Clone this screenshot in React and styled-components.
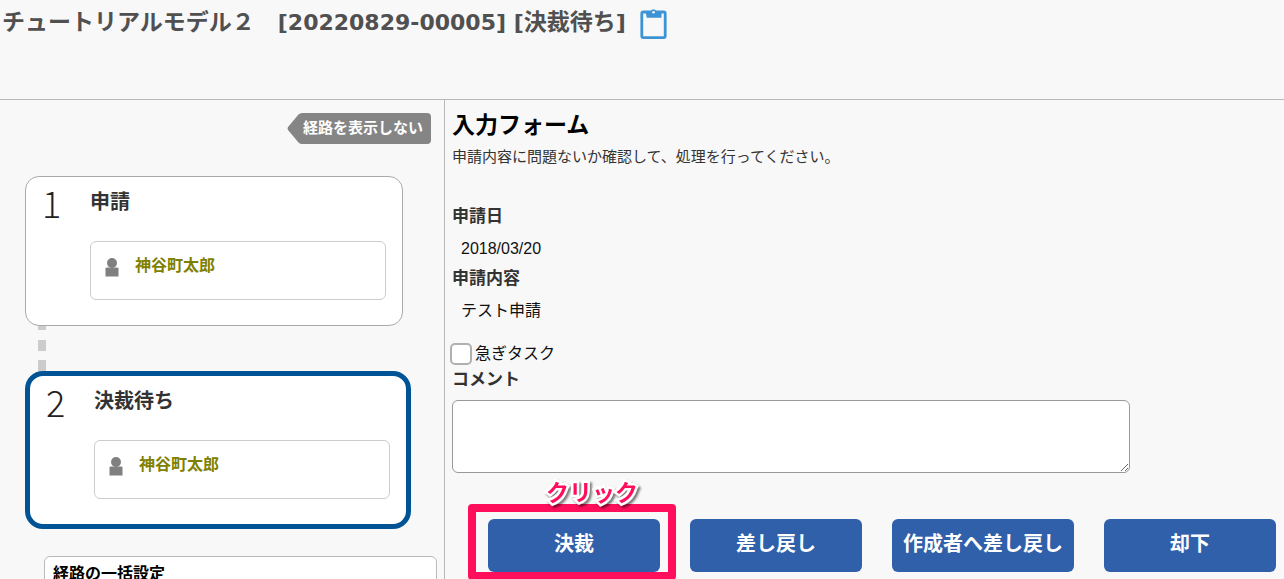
import React from "react";
import styled, { createGlobalStyle } from "styled-components";

const GlobalStyle = createGlobalStyle`
  *, *::before, *::after { box-sizing: border-box; }
  body {
    margin: 0;
    background: #f8f8f8;
    color: #333;
    font-family: "Liberation Sans", "Noto Sans CJK JP", sans-serif;
  }
  button, input, textarea { font: inherit; }
  h1, h2, h3, p, dl, dt, dd, ol { margin: 0; padding: 0; }
`;

const Page = styled.div`
  display: flex;
  flex-direction: column;
  height: 100vh;
  overflow: hidden;
`;

const Header = styled.header`
  display: flex;
  align-items: flex-start;
  gap: 14px;
  flex: none;
  min-height: 100px;
  padding: 4px 2px;
  border-bottom: 1px solid #b8b8b8;
`;

const Title = styled.h1`
  font-family: "Noto Sans CJK JP", sans-serif;
  font-size: 23px;
  line-height: 32px;
  font-weight: 700;
  color: #505050;
`;

const TitleCode = styled.span`
  font-family: "DejaVu Sans", sans-serif;
  font-size: 22px;
  line-height: 24px;
`;

const ClipboardButton = styled.button`
  display: flex;
  margin: 0;
  padding: 4px 0 0;
  border: 0;
  background: none;
`;

const Body = styled.div`
  display: flex;
  flex: 1;
  min-height: 0;
`;

const RoutePane = styled.aside`
  display: flex;
  flex-direction: column;
  align-items: flex-start;
  flex: none;
  width: 445px;
  padding: 13px 7px 0 25px;
  border-right: 1px solid #b8b8b8;
  overflow: hidden;
`;

const HideRouteButton = styled.button`
  display: flex;
  align-self: flex-end;
  flex: none;
  align-items: center;
  height: 31px;
  margin: 0 6px 32px 0;
  padding: 0;
  border: 0;
  background: none;
  color: #fff;
  font-size: 15px;
  font-weight: 700;
`;

const ToggleText = styled.span`
  height: 31px;
  padding: 0 8px 0 0;
  border-radius: 0 4px 4px 0;
  background: #858585;
  line-height: 30px;
`;

const Steps = styled.ol`
  list-style: none;
`;

const Step = styled.li`
  & + &::before {
    content: "";
    display: block;
    width: 8px;
    height: 45px;
    margin-left: 13px;
    background: linear-gradient(#ccc 0 4px, transparent 4px 14px, #ccc 14px 25px, transparent 25px 34px, #ccc 34px);
  }
`;

const StepCard = styled.section`
  box-sizing: content-box;
  display: grid;
  grid-template-columns: 48px 296px;
  grid-template-rows: 64px 59px;
  width: 360px;
  height: 148px;
  padding: 0 0 0 16px;
  border: ${(p) => (p.$current ? "5px solid #005496" : "1px solid #aaa")};
  border-radius: ${(p) => (p.$current ? "18px" : "14px")};
  background: #fff;
`;

const StepNumber = styled.span`
  color: #222;
  font-family: "Noto Sans CJK JP", sans-serif;
  font-weight: 300;
  font-size: 36px;
  line-height: 50px;
`;

const StepName = styled.h3`
  font-size: 20px;
  line-height: 50px;
`;

const Assignee = styled.div`
  grid-column: 2;
  display: flex;
  align-items: flex-start;
  gap: 16px;
  padding: 16px 14px;
  border: 1px solid #ccc;
  border-radius: 6px;
  color: #808000;
  font-size: 16px;
  line-height: 16px;
  font-weight: 700;
`;

const BulkPanel = styled.section`
  flex: none;
  align-self: stretch;
  height: 120px;
  margin: 27px 0 0 19px;
  padding: 5px 8px;
  border: 1px solid #bbb;
  border-radius: 6px;
  background: #fff;
`;

const BulkTitle = styled.h3`
  color: #000;
  font-size: 16px;
  line-height: 24px;
`;

const FormPane = styled.main`
  flex: 1;
  min-width: 0;
  padding: 9px 6px 0 7px;
  overflow: hidden;
`;

const FormTitle = styled.h2`
  color: #000;
  font-size: 23px;
  line-height: 32px;
`;

const Description = styled.p`
  margin: 4px 0 36px;
  font-size: 15px;
  line-height: 24px;
`;

const FieldLabel = styled.dt`
  font-size: 17px;
  line-height: 24px;
  font-weight: 700;
`;

const FieldValue = styled.dd`
  padding: 3px 9px 1px;
  color: #111;
  font-size: 16px;
  line-height: 34px;
`;

const UrgentLabel = styled.label`
  display: flex;
  align-items: center;
  gap: 3px;
  width: max-content;
  height: 26px;
  margin-top: 12px;
  color: #111;
  font-size: 16px;
  line-height: 22px;
`;

const Checkbox = styled.input`
  appearance: none;
  width: 22px;
  height: 22px;
  margin: 0 0 0 -2px;
  border: 2px solid #b0b0b0;
  border-radius: 5px;
  background: #fff;
`;

const CommentLabel = styled.label`
  display: block;
  margin-top: 1px;
  font-size: 17px;
  line-height: 24px;
  font-weight: 700;
`;

const CommentRow = styled.div`
  padding-right: 148px;
`;

const Comment = styled.textarea`
  display: block;
  width: 100%;
  height: 73px;
  margin: 8px 0 46px;
  border: 1px solid #999;
  border-radius: 6px;
  background: #fff;
`;

const Actions = styled.div`
  display: flex;
  gap: 30px;
  padding-left: 36px;
`;

const ActionButton = styled.button`
  width: 100%;
  min-width: 172px;
  height: 53px;
  padding: 0 11px 6px;
  border: 0;
  border-radius: 6px;
  background: #3060aa;
  color: #fff;
  font-size: 20px;
  font-weight: 700;
  white-space: nowrap;
`;

const ActionSlot = styled.div`
  position: relative;
  flex: none;
`;

const Highlight = styled.div`
  position: absolute;
  inset: -15px -16px -8px -20px;
  border: 8px solid #ff0f5b;
  border-radius: 4px;
  pointer-events: none;
`;

const HighlightText = styled.span`
  position: absolute;
  top: -42px;
  left: 58px;
  color: #ff0f5b;
  font-size: 23px;
  line-height: 32px;
  font-weight: 700;
  white-space: nowrap;
  pointer-events: none;
  paint-order: stroke fill;
  -webkit-text-stroke: 5px #fff;
  filter: drop-shadow(2px 2px 1px rgba(0, 0, 0, 0.5));
`;

const PersonIcon = () => (
  <svg width="14" height="19" viewBox="0 0 14 19" fill="#808080" aria-hidden="true">
    <circle cx="7" cy="5" r="5" />
    <path d="M1.500 9.500h11l1 1v8H.5v-8z" />
  </svg>
);

const ClipboardIcon = () => (
  <svg width="28" height="32" viewBox="0 0 28 32" aria-hidden="true">
    <rect x="1.800" y="4" width="23.400" height="25.600" rx="1.500" fill="none" stroke="#3c94d4" strokeWidth="2.800" />
    <path fill="#3c94d4" d="M5.500 4h3.500L11 2.800a2.800 2.800 0 0 1 5 0L18 4h3.500v5.800H6.500V8z" />
    <circle cx="13.500" cy="4.200" r="1.300" fill="#f8f8f8" />
  </svg>
);

const steps = [
  { name: "申請", user: "神谷町太郎", current: false },
  { name: "決裁待ち", user: "神谷町太郎", current: true },
];

const actions = ["決裁", "差し戻し", "作成者へ差し戻し", "却下"];

export default function App() {
  return (
    <>
      <GlobalStyle />
      <Page>
        <Header>
          <Title>
            チュートリアルモデル２　<TitleCode>[20220829-00005] [</TitleCode>決裁待ち<TitleCode>]</TitleCode>
          </Title>
          <ClipboardButton type="button" aria-label="コピー">
            <ClipboardIcon />
          </ClipboardButton>
        </Header>
        <Body>
          <RoutePane>
            <HideRouteButton type="button">
              <svg width="16" height="31" viewBox="0 0 16 31" fill="#858585" aria-hidden="true">
                <path d="M16 0H15Q13 0 11.500 1.500L1 14Q0 15.500 1 17L11.500 29.500Q13 31 15 31H16z" />
              </svg>
              <ToggleText>経路を表示しない</ToggleText>
            </HideRouteButton>
            <Steps>
              {steps.map((step, i) => (
                <Step key={step.name}>
                  <StepCard $current={step.current}>
                    <StepNumber>{i + 1}</StepNumber>
                    <StepName>{step.name}</StepName>
                    <Assignee>
                      <PersonIcon />
                      {step.user}
                    </Assignee>
                  </StepCard>
                </Step>
              ))}
            </Steps>
            <BulkPanel>
              <BulkTitle>経路の一括設定</BulkTitle>
            </BulkPanel>
          </RoutePane>
          <FormPane>
            <FormTitle>入力フォーム</FormTitle>
            <Description>申請内容に問題ないか確認して、処理を行ってください。</Description>
            <dl>
              <FieldLabel>申請日</FieldLabel>
              <FieldValue>2018/03/20</FieldValue>
              <FieldLabel>申請内容</FieldLabel>
              <FieldValue>テスト申請</FieldValue>
            </dl>
            <UrgentLabel>
              <Checkbox type="checkbox" />
              急ぎタスク
            </UrgentLabel>
            <CommentLabel htmlFor="comment">コメント</CommentLabel>
            <CommentRow>
              <Comment id="comment" />
            </CommentRow>
            <Actions>
              {actions.map((name, i) => (
                <ActionSlot key={name}>
                  <ActionButton type="button">{name}</ActionButton>
                  {i === 0 && (
                    <>
                      <Highlight />
                      <HighlightText>クリック</HighlightText>
                    </>
                  )}
                </ActionSlot>
              ))}
            </Actions>
          </FormPane>
        </Body>
      </Page>
    </>
  );
}
